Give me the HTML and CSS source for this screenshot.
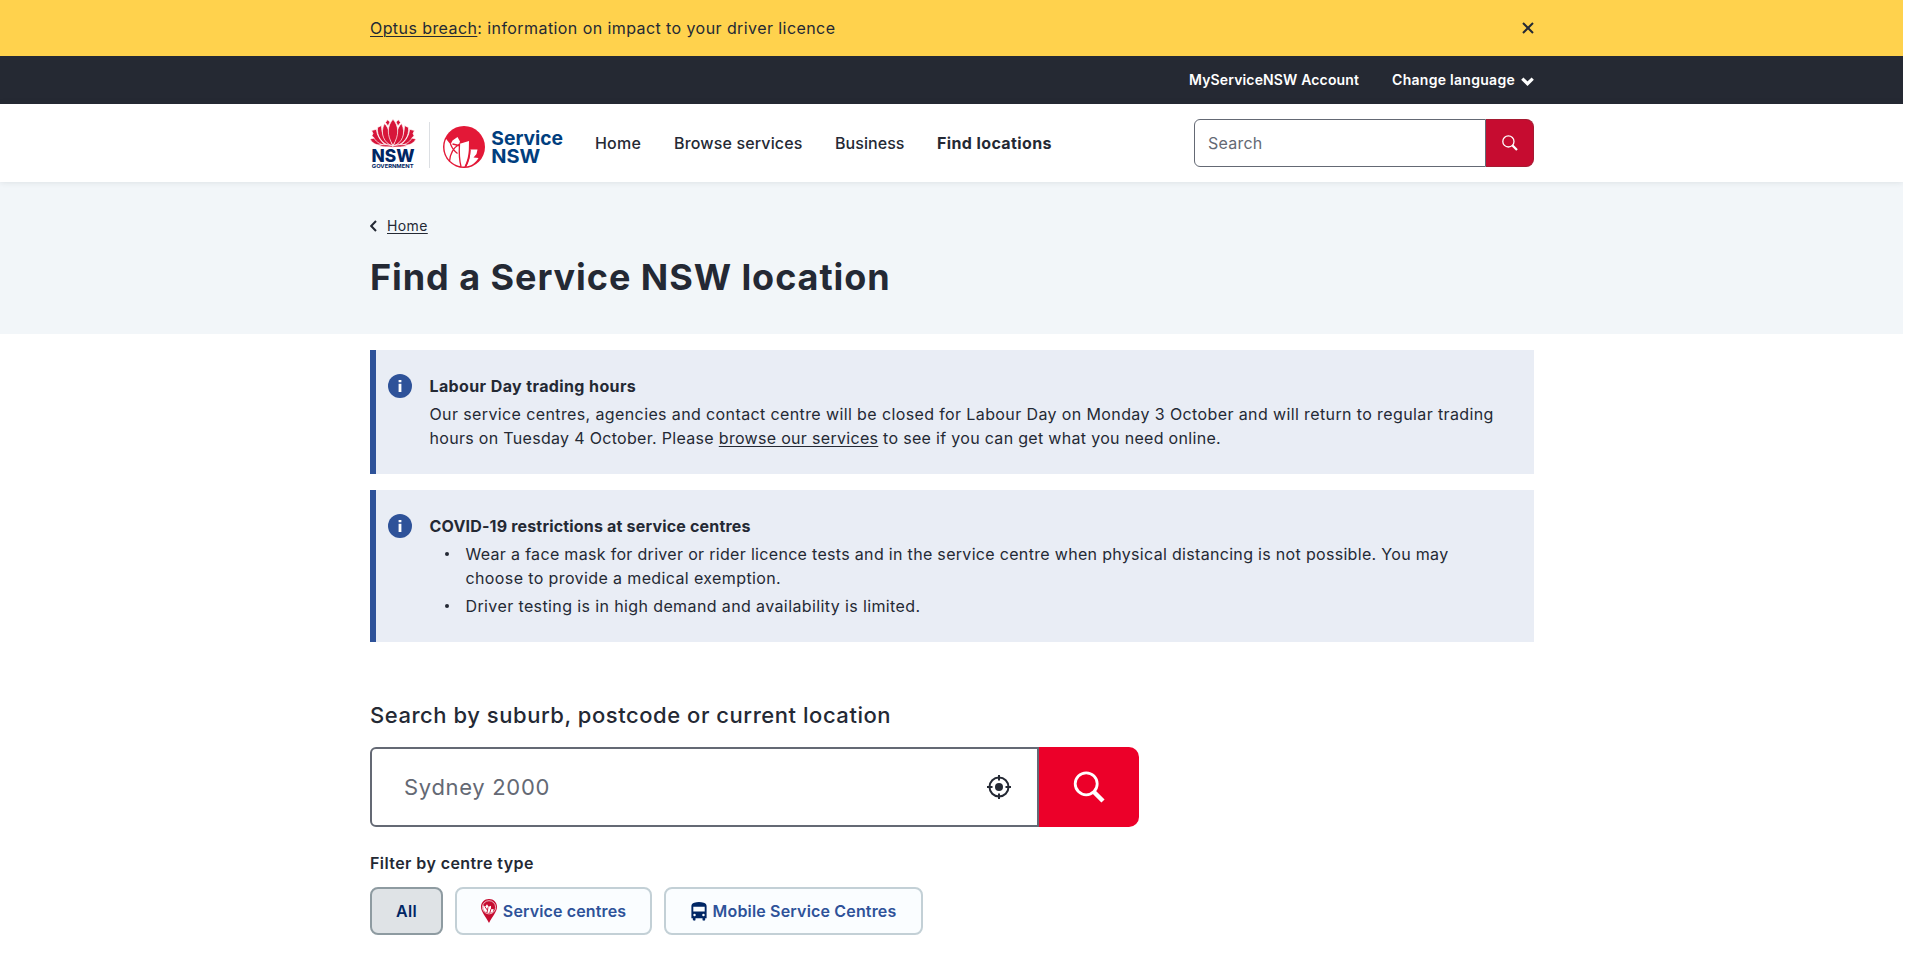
FILE: index.html
```html
<!DOCTYPE html>
<html lang="en">
<head>
<meta charset="utf-8">
<title>Find a Service NSW location</title>
<link rel="stylesheet" href="styles.css">
</head>
<body>
<div class="notice">
  <div class="container notice-row">
    <p class="notice-text"><a href="#">Optus breach</a>: information on impact to your driver licence</p>
    <svg class="close" viewBox="0 0 12 12"><path d="M1 1l10 10M11 1L1 11"/></svg>
  </div>
</div>
<div class="utility">
  <div class="container utility-row">
    <a class="account">MyServiceNSW Account</a>
    <a class="language">Change language</a>
    <svg class="chevron" viewBox="0 0 12 8"><path d="M1.200 1.300L6 6l4.800-4.700"/></svg>
  </div>
</div>
<header class="header">
  <div class="container header-row">
    <svg class="logo-gov" viewBox="0 0 46 50">
      <defs>
        <g id="half-bloom">
          <path d="M15.500 3.500L17.500 0.800L20 3L18 7Z"/>
          <path d="M0 20.300C4.500 18 9.500 19 13.500 24.800C9 27.300 3.500 25.800 0 20.300Z"/>
          <path d="M1.500 11.500L6.500 10.300C6.800 16 10 22 16 26.500C9 25.500 5 21.500 3.800 18.500L1.800 17L3 14.500Z"/>
          <path d="M7.500 8.500L11.500 6.500C11.500 15 15 22 20.500 26.800C12 25 6.500 17 7.500 8.500Z"/>
          <path d="M14.500 4.500C19.500 9 20 18 22.500 26.800C14 24.500 9.500 14 14.500 4.500Z"/>
          <path d="M8.500 26.600C13 25 18.500 25.600 23.200 27V28.300C18 27.600 13 28.700 8.500 26.600Z"/>
        </g>
      </defs>
      <g class="petals">
        <use href="#half-bloom"/>
        <use href="#half-bloom" transform="translate(46 0) scale(-1 1)"/>
        <path d="M23 0.300C29 7 29.500 16 23 26.500C16.500 16 17 7 23 0.300Z"/>
      </g>
      <text class="gov-nsw" x="1.500" y="42.500" textLength="43" lengthAdjust="spacingAndGlyphs">NSW</text>
      <text class="gov-name" x="1.800" y="48.700" textLength="41.700" lengthAdjust="spacingAndGlyphs">GOVERNMENT</text>
    </svg>
    <span class="logo-rule"></span>
    <svg class="logo-service" viewBox="0 0 122 46">
      <circle cx="21" cy="23" r="21" class="disc"/>
      <g class="bloom">
        <path d="M3.200 15L7.500 20.500L9.500 16.500L14.500 13L17 17.500L16 20L26 17L25.800 26C25.500 32 24 38 21.500 42.500C10 42.500 1.500 34 1.500 23C1.500 20 2 17 3.200 15Z"/>
        <path d="M27.500 25.500L34.500 25.500L33.500 30L30.500 33.500L35.500 34C32.500 39 29 41.500 23.500 42.500C26 38 27.500 32 27.500 25.500Z"/>
      </g>
      <g class="bloom-lines">
        <path d="M7.500 20C9 24 11 27 14.500 29.500M16.500 20C10 24 7 30 6.500 37.500M16.500 20C16 28 16 35 18 42.500M9.500 20L16 21.500M27 26C26.500 33 25 38 22.500 42.500"/>
      </g>
      <text class="svc" x="48.300" y="20.700" textLength="71.800" lengthAdjust="spacingAndGlyphs">Service</text>
      <text class="svc" x="48.300" y="39" textLength="49" lengthAdjust="spacingAndGlyphs">NSW</text>
    </svg>
    <nav class="nav">
      <a class="nav-home">Home</a>
      <a class="nav-browse">Browse services</a>
      <a class="nav-business">Business</a>
      <a class="nav-find">Find locations</a>
    </nav>
    <div class="site-search">
      <div class="site-input">Search</div>
      <div class="site-button"><svg viewBox="0 0 16 16"><circle cx="6.400" cy="6.400" r="5.600"/><path d="M10.400 10.400L15 15" class="handle"/></svg></div>
    </div>
  </div>
</header>
<section class="hero">
  <div class="container">
    <div class="crumb">
      <svg viewBox="0 0 7 12"><path d="M6 1L1.200 6L6 11"/></svg>
      <a href="#">Home</a>
    </div>
    <h1>Find a Service NSW location</h1>
  </div>
</section>
<main class="container">
  <section class="alert">
    <svg class="info" viewBox="0 0 24 24"><circle cx="12" cy="12" r="12"/><path d="M10.600 6h2.800v2.300h-2.800zM10.600 9.800h2.800V18h-2.800z"/></svg>
    <div>
      <h2 class="alert-title">Labour Day trading hours</h2>
      <p class="alert-text">Our service centres, agencies and contact centre will be closed for Labour Day on Monday 3 October and will return to regular trading <span class="line-two">hours on Tuesday 4 October. Please <a href="#">browse our services</a> to see if you can get what you need online.</span></p>
    </div>
  </section>
  <section class="alert">
    <svg class="info" viewBox="0 0 24 24"><circle cx="12" cy="12" r="12"/><path d="M10.600 6h2.800v2.300h-2.800zM10.600 9.800h2.800V18h-2.800z"/></svg>
    <div>
      <h2 class="alert-title title-covid">COVID-19 restrictions at service centres</h2>
      <ul>
        <li><span class="line-mask">Wear a face mask for driver or rider licence tests and in the service centre when physical distancing is not possible. You may</span> choose to provide a medical exemption.</li>
        <li>Driver testing is in high demand and availability is limited.</li>
      </ul>
    </div>
  </section>
  <h2 class="search-title">Search by suburb, postcode or current location</h2>
  <div class="finder">
    <div class="finder-input">
      <span>Sydney 2000</span>
      <svg viewBox="0 0 24 24"><circle cx="12" cy="12" r="9.500" class="ring"/><circle cx="12" cy="12" r="4"/><path d="M12 0v5.500M12 18.500V24M0 12h5.500M18.500 12H24" class="ticks"/></svg>
    </div>
    <div class="finder-button"><svg viewBox="0 0 32 32"><circle cx="13.200" cy="12.800" r="11"/><path d="M20.500 20.500L30 30" class="handle"/></svg></div>
  </div>
  <h3 class="filter-title">Filter by centre type</h3>
  <div class="filters">
    <button class="filter filter-all">All</button>
    <button class="filter filter-service">
      <svg class="pin" viewBox="0 0 16 24"><path d="M8 0C12.600 0 16 3.400 16 8C16 12.800 11.500 17 8 24C4.500 17 0 12.800 0 8C0 3.400 3.400 0 8 0Z"/><circle cx="8" cy="8.300" r="6.600"/><path class="pin-bloom" d="M2.200 6.300L4.200 7.800L6 5.300L7.500 7.800L10 6.800V10L12.800 10.300L11.500 13.300C8 15 3.500 13.800 2.200 10.300Z"/><path class="pin-lines" d="M4 7.800l2.500 3.500M7 8.300L6 13.800M10 9.800l-1.300 4.500"/></svg>
      <span>Service centres</span>
    </button>
    <button class="filter filter-mobile">
      <svg class="bus" viewBox="0 0 16 20"><path fill-rule="evenodd" d="M3 0.800C6 -0.100 10 -0.100 13 0.800C15 1.400 16 2.500 16 4.500V17H14.500V18.700C14.500 20 11.700 20 11.700 18.700V17H4.300V18.700C4.300 20 1.500 20 1.500 18.700V17H0V4.500C0 2.500 1 1.400 3 0.800ZM2 5V10H14V5ZM3.300 12.400A1.300 1.300 0 1 0 3.300 15A1.300 1.300 0 1 0 3.300 12.400ZM12.700 12.400A1.300 1.300 0 1 0 12.700 15A1.300 1.300 0 1 0 12.700 12.400Z"/></svg>
      <span>Mobile Service Centres</span>
    </button>
  </div>
</main>
</body>
</html>
```
FILE: styles.css
```css
* { box-sizing: border-box; }
body {
  margin: 0;
  width: 1903px;
  height: 955px;
  overflow: hidden;
  background: #fff;
  color: #242934;
  font: 400 16px/24px Inter, "Liberation Sans", sans-serif;
  letter-spacing: 0.385px;
}
html { background: #fff; overflow: hidden; }
h1, h2, h3, p, ul { margin: 0; padding: 0; }
a { color: inherit; text-underline-offset: 2px; text-decoration-thickness: 1px; }
svg { display: block; flex: none; fill: none; }
.container { width: 1164px; margin-left: 370px; }

.notice { background: #ffd24d; }
.notice-row { height: 56px; display: flex; align-items: center; justify-content: space-between; }
.notice-text { letter-spacing: 0.42px; }
.close { width: 12px; height: 12px; stroke: #242934; stroke-width: 2; }

.utility { background: #252933; color: #fff; font-size: 14px; font-weight: 600; }
.utility-row { height: 48px; display: flex; align-items: center; justify-content: flex-end; }
.account { letter-spacing: 0.14px; margin-right: 33px; }
.language { letter-spacing: 0.28px; }
.chevron { width: 13px; height: 9px; margin: 2px 0 0 6px; stroke: #fff; stroke-width: 3; }

.header { position: relative; background: #fff; box-shadow: 0 0 6px rgba(36, 41, 52, 0.12); }
.header-row { height: 78px; display: flex; align-items: center; }
.logo-gov { width: 46px; height: 50px; margin-top: 2px; }
.petals { fill: #d7153a; stroke: #fff; stroke-width: 0.7; }
.gov-nsw { font: 800 17.500px Inter, sans-serif; letter-spacing: 0; fill: #002664; }
.gov-name { font: 700 5.200px Inter, sans-serif; letter-spacing: 0; fill: #002664; }
.logo-rule { width: 1px; height: 46px; margin: 4px 13px 0 13px; background: #dcdfe3; }
.logo-service { width: 122px; height: 46px; margin-top: 8px; }
.disc { fill: #e31837; }
.bloom { fill: #fff; }
.bloom-lines { stroke: #e31837; stroke-width: 1.300; }
.svc { font: 700 19px Inter, sans-serif; letter-spacing: 0; fill: #003e7e; }
.nav { display: flex; margin-left: 30px; font-weight: 500; }
.nav a { margin-right: 32px; white-space: nowrap; }
.nav-home { width: 47px; letter-spacing: 0.2px; }
.nav-browse { width: 129px; letter-spacing: 0.15px; }
.nav-business { width: 70px; letter-spacing: 0.06px; }
.nav-find { font-weight: 700; }
.site-search { display: flex; width: 340px; height: 48px; margin-left: auto; }
.site-input {
  flex: 1;
  padding: 0 13px;
  border: 1px solid #646974;
  border-radius: 6px 0 0 6px;
  color: #646974;
  line-height: 46px;
  letter-spacing: 0.23px;
}
.site-button {
  display: flex;
  align-items: center;
  justify-content: center;
  width: 48px;
  border: 1px solid #a51a31;
  border-left: 0;
  border-radius: 0 8px 8px 0;
  background: #c60c30;
}
.site-button svg { width: 16px; height: 16px; stroke: #fff; stroke-width: 1.300; }
.site-button .handle { stroke-width: 2.200; }

.hero { height: 152px; padding-top: 34px; background: #f2f6f9; }
.crumb { display: flex; align-items: center; height: 20px; font-size: 14px; line-height: 20px; }
.crumb svg { width: 7px; height: 12px; margin-right: 10px; stroke: #242934; stroke-width: 2; }
h1 { margin-top: 19px; font-size: 36px; line-height: 44px; font-weight: 700; letter-spacing: 0.94px; }

.alert {
  display: flex;
  gap: 17.5px;
  margin-top: 16px;
  padding: 24px 32px 24px 12px;
  border-left: 6px solid #2e5299;
  background: #e9edf5;
}
.info { width: 24px; height: 24px; fill: #fff; }
.info circle { fill: #2e5299; }
.alert-title { margin-bottom: 4px; font-size: 16px; line-height: 24px; font-weight: 700; }
.title-covid { letter-spacing: 0.18px; }
.line-two { letter-spacing: 0.31px; }
.line-mask { letter-spacing: 0.315px; }
ul { list-style: none; }
li { position: relative; padding-left: 36px; }
li + li { margin-top: 4px; }
li::before {
  content: "";
  position: absolute;
  left: 15px;
  top: 10px;
  width: 4px;
  height: 4px;
  border-radius: 50%;
  background: #242934;
}

.search-title { margin-top: 59px; font-size: 22px; line-height: 28px; font-weight: 500; letter-spacing: 0.54px; }
.finder { display: flex; width: 769px; height: 80px; margin-top: 18px; }
.finder-input {
  flex: 1;
  display: flex;
  align-items: center;
  justify-content: space-between;
  padding: 0 26px 0 32px;
  border: 2px solid #646974;
  border-radius: 6px 0 0 6px;
  color: #646974;
  font-size: 22px;
  letter-spacing: 0.68px;
}
.finder-input svg { width: 24px; height: 24px; fill: #242934; }
.finder-input .ring { fill: none; stroke: #242934; stroke-width: 2; }
.finder-input .ticks { stroke: #242934; stroke-width: 2; }
.finder-button {
  display: flex;
  align-items: center;
  justify-content: center;
  width: 100px;
  border-radius: 0 10px 10px 0;
  background: #ec0029;
}
.finder-button svg { width: 32px; height: 32px; margin-right: 1px; stroke: #fff; stroke-width: 2.800; }
.finder-button .handle { stroke-width: 4.500; }

.filter-title { margin-top: 24px; font-size: 16px; line-height: 24px; font-weight: 600; letter-spacing: 0.42px; }
.filters { display: flex; gap: 12px; margin-top: 12px; }
.filter {
  display: flex;
  align-items: center;
  justify-content: center;
  height: 48px;
  padding: 0;
  border: 2px solid #c3d0d6;
  border-radius: 8px;
  background: #fafdff;
  color: #2e5299;
  font: 600 16px/24px Inter, sans-serif;
}
.filter-all { width: 73px; border-color: #8e9ba1; background: #dfe3e6; color: #002664; letter-spacing: 0.33px; }
.filter-service { width: 197px; letter-spacing: 0.13px; }
.filter-mobile { width: 259px; letter-spacing: 0.17px; }
.pin { width: 16px; height: 24px; margin-right: 6px; fill: #c60c30; }
.pin circle { stroke: #fff; stroke-width: 0.700; }
.pin .pin-bloom { fill: #fff; }
.pin .pin-lines { stroke: #c60c30; stroke-width: 0.900; }
.bus { width: 16px; height: 19px; margin-right: 6px; fill: #002664; }
```
